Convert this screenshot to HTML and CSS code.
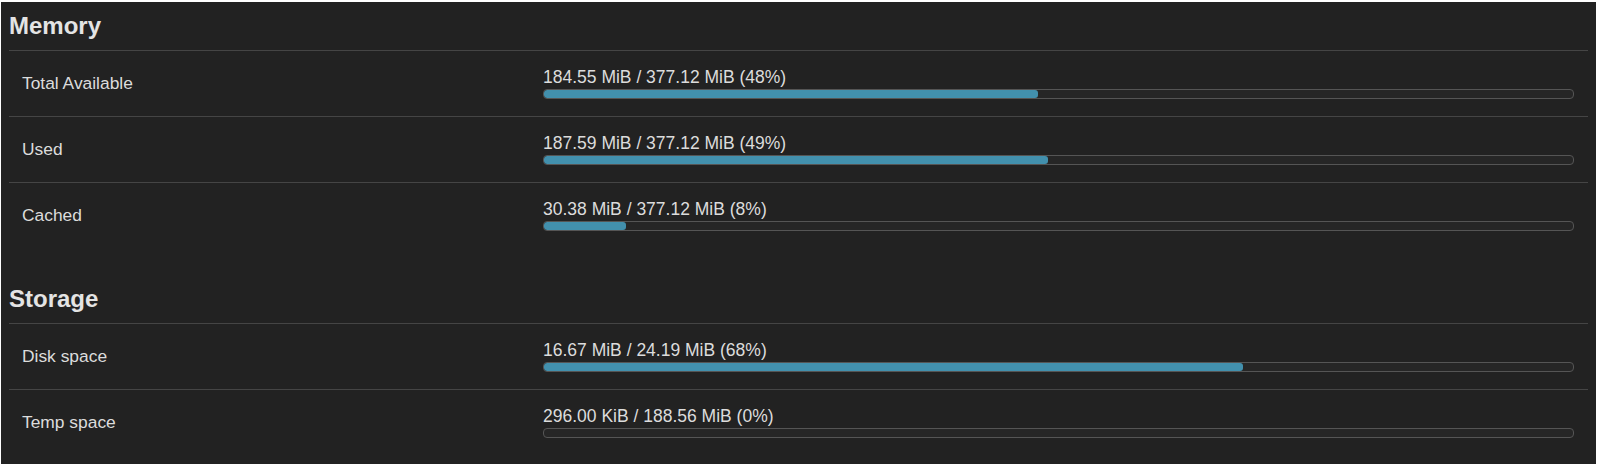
FILE: index.html
```html
<!DOCTYPE html>
<html>
<head>
<meta charset="utf-8">
<title>Status</title>
<link rel="stylesheet" href="styles.css">
</head>
<body>
<div class="page">
  <section class="section">
    <h3 class="heading">Memory</h3>
    <div class="row">
      <div class="label">Total Available</div>
      <div class="value">
        <div class="value-text">184.55 MiB / 377.12 MiB (48%)</div>
        <div class="bar"><div class="fill" style="width:48%"></div></div>
      </div>
    </div>
    <div class="row">
      <div class="label">Used</div>
      <div class="value">
        <div class="value-text">187.59 MiB / 377.12 MiB (49%)</div>
        <div class="bar"><div class="fill" style="width:49%"></div></div>
      </div>
    </div>
    <div class="row">
      <div class="label">Cached</div>
      <div class="value">
        <div class="value-text">30.38 MiB / 377.12 MiB (8%)</div>
        <div class="bar"><div class="fill" style="width:8%"></div></div>
      </div>
    </div>
  </section>
  <section class="section">
    <h3 class="heading">Storage</h3>
    <div class="row">
      <div class="label">Disk space</div>
      <div class="value">
        <div class="value-text">16.67 MiB / 24.19 MiB (68%)</div>
        <div class="bar"><div class="fill" style="width:68%"></div></div>
      </div>
    </div>
    <div class="row">
      <div class="label">Temp space</div>
      <div class="value">
        <div class="value-text">296.00 KiB / 188.56 MiB (0%)</div>
        <div class="bar"><div class="fill" style="width:0%"></div></div>
      </div>
    </div>
  </section>
</div>
</body>
</html>
```

FILE: styles.css
```css
html, body {
  margin: 0;
  padding: 0;
  background: #ffffff;
}

body {
  font-family: "Liberation Sans", Arial, sans-serif;
}

.page {
  margin: 2px 4px 2px 1px;
  height: 462px;
  box-sizing: border-box;
  background: #222222;
  padding: 10px 8.5px 0 8px;
  overflow: hidden;
}

.section {
  display: flex;
  flex-direction: column;
}

.section + .section {
  margin-top: 37px;
}

.heading {
  margin: 0;
  padding: 0 0 11px 0;
  font-size: 24px;
  font-weight: bold;
  line-height: 27px;
  color: #e4e4e4;
}

.row {
  display: grid;
  grid-template-columns: 534px 1fr;
  align-items: center;
  height: 66px;
  box-sizing: border-box;
  border-top: 1px solid #454545;
}

.label {
  padding-left: 13px;
  font-size: 17.4px;
  line-height: 19px;
  color: #dcdcdc;
}

.value {
  padding-right: 14px;
  display: flex;
  flex-direction: column;
}

.value-text {
  font-size: 17.5px;
  line-height: 19px;
  color: #dcdcdc;
}

.bar {
  margin-top: 2px;
  height: 10px;
  box-sizing: border-box;
  border: 1px solid #555555;
  border-radius: 4px;
  background: #262626;
  overflow: hidden;
}

.fill {
  height: 100%;
  background: #4290ad;
  border-radius: 3px;
}
```
